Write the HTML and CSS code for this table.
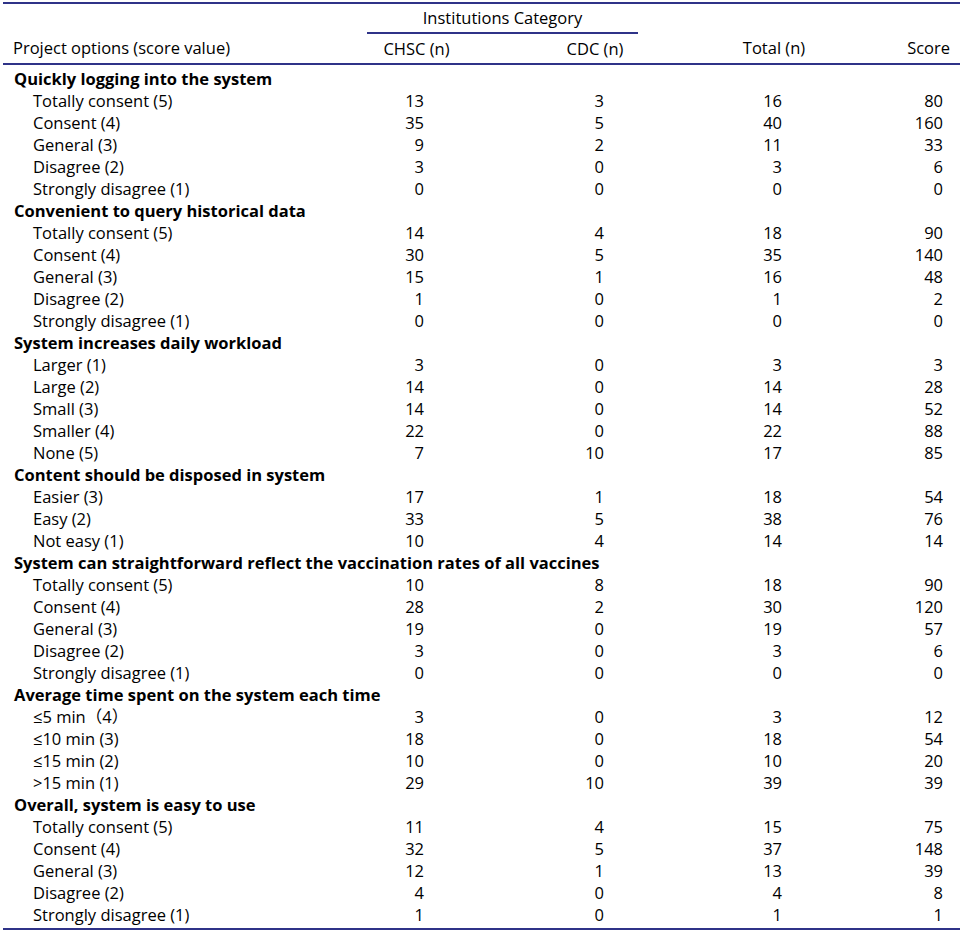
FILE: index.html
```html
<!DOCTYPE html>
<html lang="en">
<head>
<meta charset="utf-8">
<title>Table</title>
<link rel="stylesheet" href="styles.css">
</head>
<body>
<div class="wrap">
<table class="tbl">
<colgroup>
<col class="c-label"><col class="c-chsc"><col class="c-cdc"><col class="c-total"><col class="c-score">
</colgroup>
<thead>
<tr class="h1">
<th></th>
<th colspan="2" class="span-head"><span class="span-text">Institutions Category</span></th>
<th></th><th></th>
</tr>
<tr class="h2">
<th class="lab">Project options (score value)</th>
<th class="hc chsc">CHSC (n)</th>
<th class="hc cdc">CDC (n)</th>
<th class="hc total">Total (n)</th>
<th class="hc score">Score</th>
</tr>
</thead>
<tbody id="body">
<tr class="gap"><td colspan="5"></td></tr>
<tr class="sec"><td colspan="5">Quickly logging into the system</td></tr>
<tr><td class="it">Totally consent (5)</td><td class="n chsc">13</td><td class="n cdc">3</td><td class="n total">16</td><td class="n score">80</td></tr>
<tr><td class="it">Consent (4)</td><td class="n chsc">35</td><td class="n cdc">5</td><td class="n total">40</td><td class="n score">160</td></tr>
<tr><td class="it">General (3)</td><td class="n chsc">9</td><td class="n cdc">2</td><td class="n total">11</td><td class="n score">33</td></tr>
<tr><td class="it">Disagree (2)</td><td class="n chsc">3</td><td class="n cdc">0</td><td class="n total">3</td><td class="n score">6</td></tr>
<tr><td class="it">Strongly disagree (1)</td><td class="n chsc">0</td><td class="n cdc">0</td><td class="n total">0</td><td class="n score">0</td></tr>
<tr class="sec"><td colspan="5">Convenient to query historical data</td></tr>
<tr><td class="it">Totally consent (5)</td><td class="n chsc">14</td><td class="n cdc">4</td><td class="n total">18</td><td class="n score">90</td></tr>
<tr><td class="it">Consent (4)</td><td class="n chsc">30</td><td class="n cdc">5</td><td class="n total">35</td><td class="n score">140</td></tr>
<tr><td class="it">General (3)</td><td class="n chsc">15</td><td class="n cdc">1</td><td class="n total">16</td><td class="n score">48</td></tr>
<tr><td class="it">Disagree (2)</td><td class="n chsc">1</td><td class="n cdc">0</td><td class="n total">1</td><td class="n score">2</td></tr>
<tr><td class="it">Strongly disagree (1)</td><td class="n chsc">0</td><td class="n cdc">0</td><td class="n total">0</td><td class="n score">0</td></tr>
<tr class="sec"><td colspan="5">System increases daily workload</td></tr>
<tr><td class="it">Larger (1)</td><td class="n chsc">3</td><td class="n cdc">0</td><td class="n total">3</td><td class="n score">3</td></tr>
<tr><td class="it">Large (2)</td><td class="n chsc">14</td><td class="n cdc">0</td><td class="n total">14</td><td class="n score">28</td></tr>
<tr><td class="it">Small (3)</td><td class="n chsc">14</td><td class="n cdc">0</td><td class="n total">14</td><td class="n score">52</td></tr>
<tr><td class="it">Smaller (4)</td><td class="n chsc">22</td><td class="n cdc">0</td><td class="n total">22</td><td class="n score">88</td></tr>
<tr><td class="it">None (5)</td><td class="n chsc">7</td><td class="n cdc">10</td><td class="n total">17</td><td class="n score">85</td></tr>
<tr class="sec"><td colspan="5">Content should be disposed in system</td></tr>
<tr><td class="it">Easier (3)</td><td class="n chsc">17</td><td class="n cdc">1</td><td class="n total">18</td><td class="n score">54</td></tr>
<tr><td class="it">Easy (2)</td><td class="n chsc">33</td><td class="n cdc">5</td><td class="n total">38</td><td class="n score">76</td></tr>
<tr><td class="it">Not easy (1)</td><td class="n chsc">10</td><td class="n cdc">4</td><td class="n total">14</td><td class="n score">14</td></tr>
<tr class="sec"><td colspan="5">System can straightforward reflect the vaccination rates of all vaccines</td></tr>
<tr><td class="it">Totally consent (5)</td><td class="n chsc">10</td><td class="n cdc">8</td><td class="n total">18</td><td class="n score">90</td></tr>
<tr><td class="it">Consent (4)</td><td class="n chsc">28</td><td class="n cdc">2</td><td class="n total">30</td><td class="n score">120</td></tr>
<tr><td class="it">General (3)</td><td class="n chsc">19</td><td class="n cdc">0</td><td class="n total">19</td><td class="n score">57</td></tr>
<tr><td class="it">Disagree (2)</td><td class="n chsc">3</td><td class="n cdc">0</td><td class="n total">3</td><td class="n score">6</td></tr>
<tr><td class="it">Strongly disagree (1)</td><td class="n chsc">0</td><td class="n cdc">0</td><td class="n total">0</td><td class="n score">0</td></tr>
<tr class="sec"><td colspan="5">Average time spent on the system each time</td></tr>
<tr><td class="it">≤5 min（4）</td><td class="n chsc">3</td><td class="n cdc">0</td><td class="n total">3</td><td class="n score">12</td></tr>
<tr><td class="it">≤10 min (3)</td><td class="n chsc">18</td><td class="n cdc">0</td><td class="n total">18</td><td class="n score">54</td></tr>
<tr><td class="it">≤15 min (2)</td><td class="n chsc">10</td><td class="n cdc">0</td><td class="n total">10</td><td class="n score">20</td></tr>
<tr><td class="it">&gt;15 min (1)</td><td class="n chsc">29</td><td class="n cdc">10</td><td class="n total">39</td><td class="n score">39</td></tr>
<tr class="sec"><td colspan="5">Overall, system is easy to use</td></tr>
<tr><td class="it">Totally consent (5)</td><td class="n chsc">11</td><td class="n cdc">4</td><td class="n total">15</td><td class="n score">75</td></tr>
<tr><td class="it">Consent (4)</td><td class="n chsc">32</td><td class="n cdc">5</td><td class="n total">37</td><td class="n score">148</td></tr>
<tr><td class="it">General (3)</td><td class="n chsc">12</td><td class="n cdc">1</td><td class="n total">13</td><td class="n score">39</td></tr>
<tr><td class="it">Disagree (2)</td><td class="n chsc">4</td><td class="n cdc">0</td><td class="n total">4</td><td class="n score">8</td></tr>
<tr><td class="it">Strongly disagree (1)</td><td class="n chsc">1</td><td class="n cdc">0</td><td class="n total">1</td><td class="n score">1</td></tr>
<tr class="gapb"><td colspan="5"></td></tr>
</tbody>
</table>
</div>
</body>
</html>
```

FILE: styles.css
```css
html, body {
  margin: 0;
  padding: 0;
  background: #ffffff;
}
body {
  font-family: "Open Sans", "Noto Sans", "Noto Sans CJK SC", sans-serif;
  font-size: 16.5px;
  color: #000000;
}
.wrap {
  padding-top: 2px;
  padding-left: 3px;
}
.tbl {
  border-collapse: collapse;
  table-layout: fixed;
  width: 957px;
  border-top: 2px solid #2f3388;
  border-bottom: 2px solid #2f3388;
}
.c-label { width: 364px; }
.c-chsc { width: 99px; }
.c-cdc { width: 172px; }
.c-total { width: 186px; }
.c-score { width: 136px; }
th, td {
  padding: 0;
  font-weight: normal;
  white-space: nowrap;
  line-height: 22px;
  height: 22px;
}
.h1 th {
  height: 27px;
  vertical-align: middle;
  padding-bottom: 1px;
}
.span-head {
  text-align: center;
  border-bottom: 2px solid #2f3388;
}
.h2 th {
  height: 29px;
  border-bottom: 2px solid #2f3388;
  vertical-align: middle;
  text-align: center;
}
.h2 .lab {
  text-align: left;
  padding-left: 10px;
}
.h2 .cdc { padding-left: 86px; }
.h2 .total { padding-left: 86px; }
.h2 .score { text-align: right; padding-right: 10px; }
.gap td { height: 3px; line-height: 3px; }
.gapb td { height: 2px; line-height: 2px; }
.sec td {
  font-weight: bold;
  padding-left: 11px;
}
.it { padding-left: 30px; }
.n { text-align: right; }
.n.chsc { padding-right: 42px; }
.n.cdc { padding-right: 34px; }
.n.total { padding-right: 42px; }
.n.score { padding-right: 17px; }
```
